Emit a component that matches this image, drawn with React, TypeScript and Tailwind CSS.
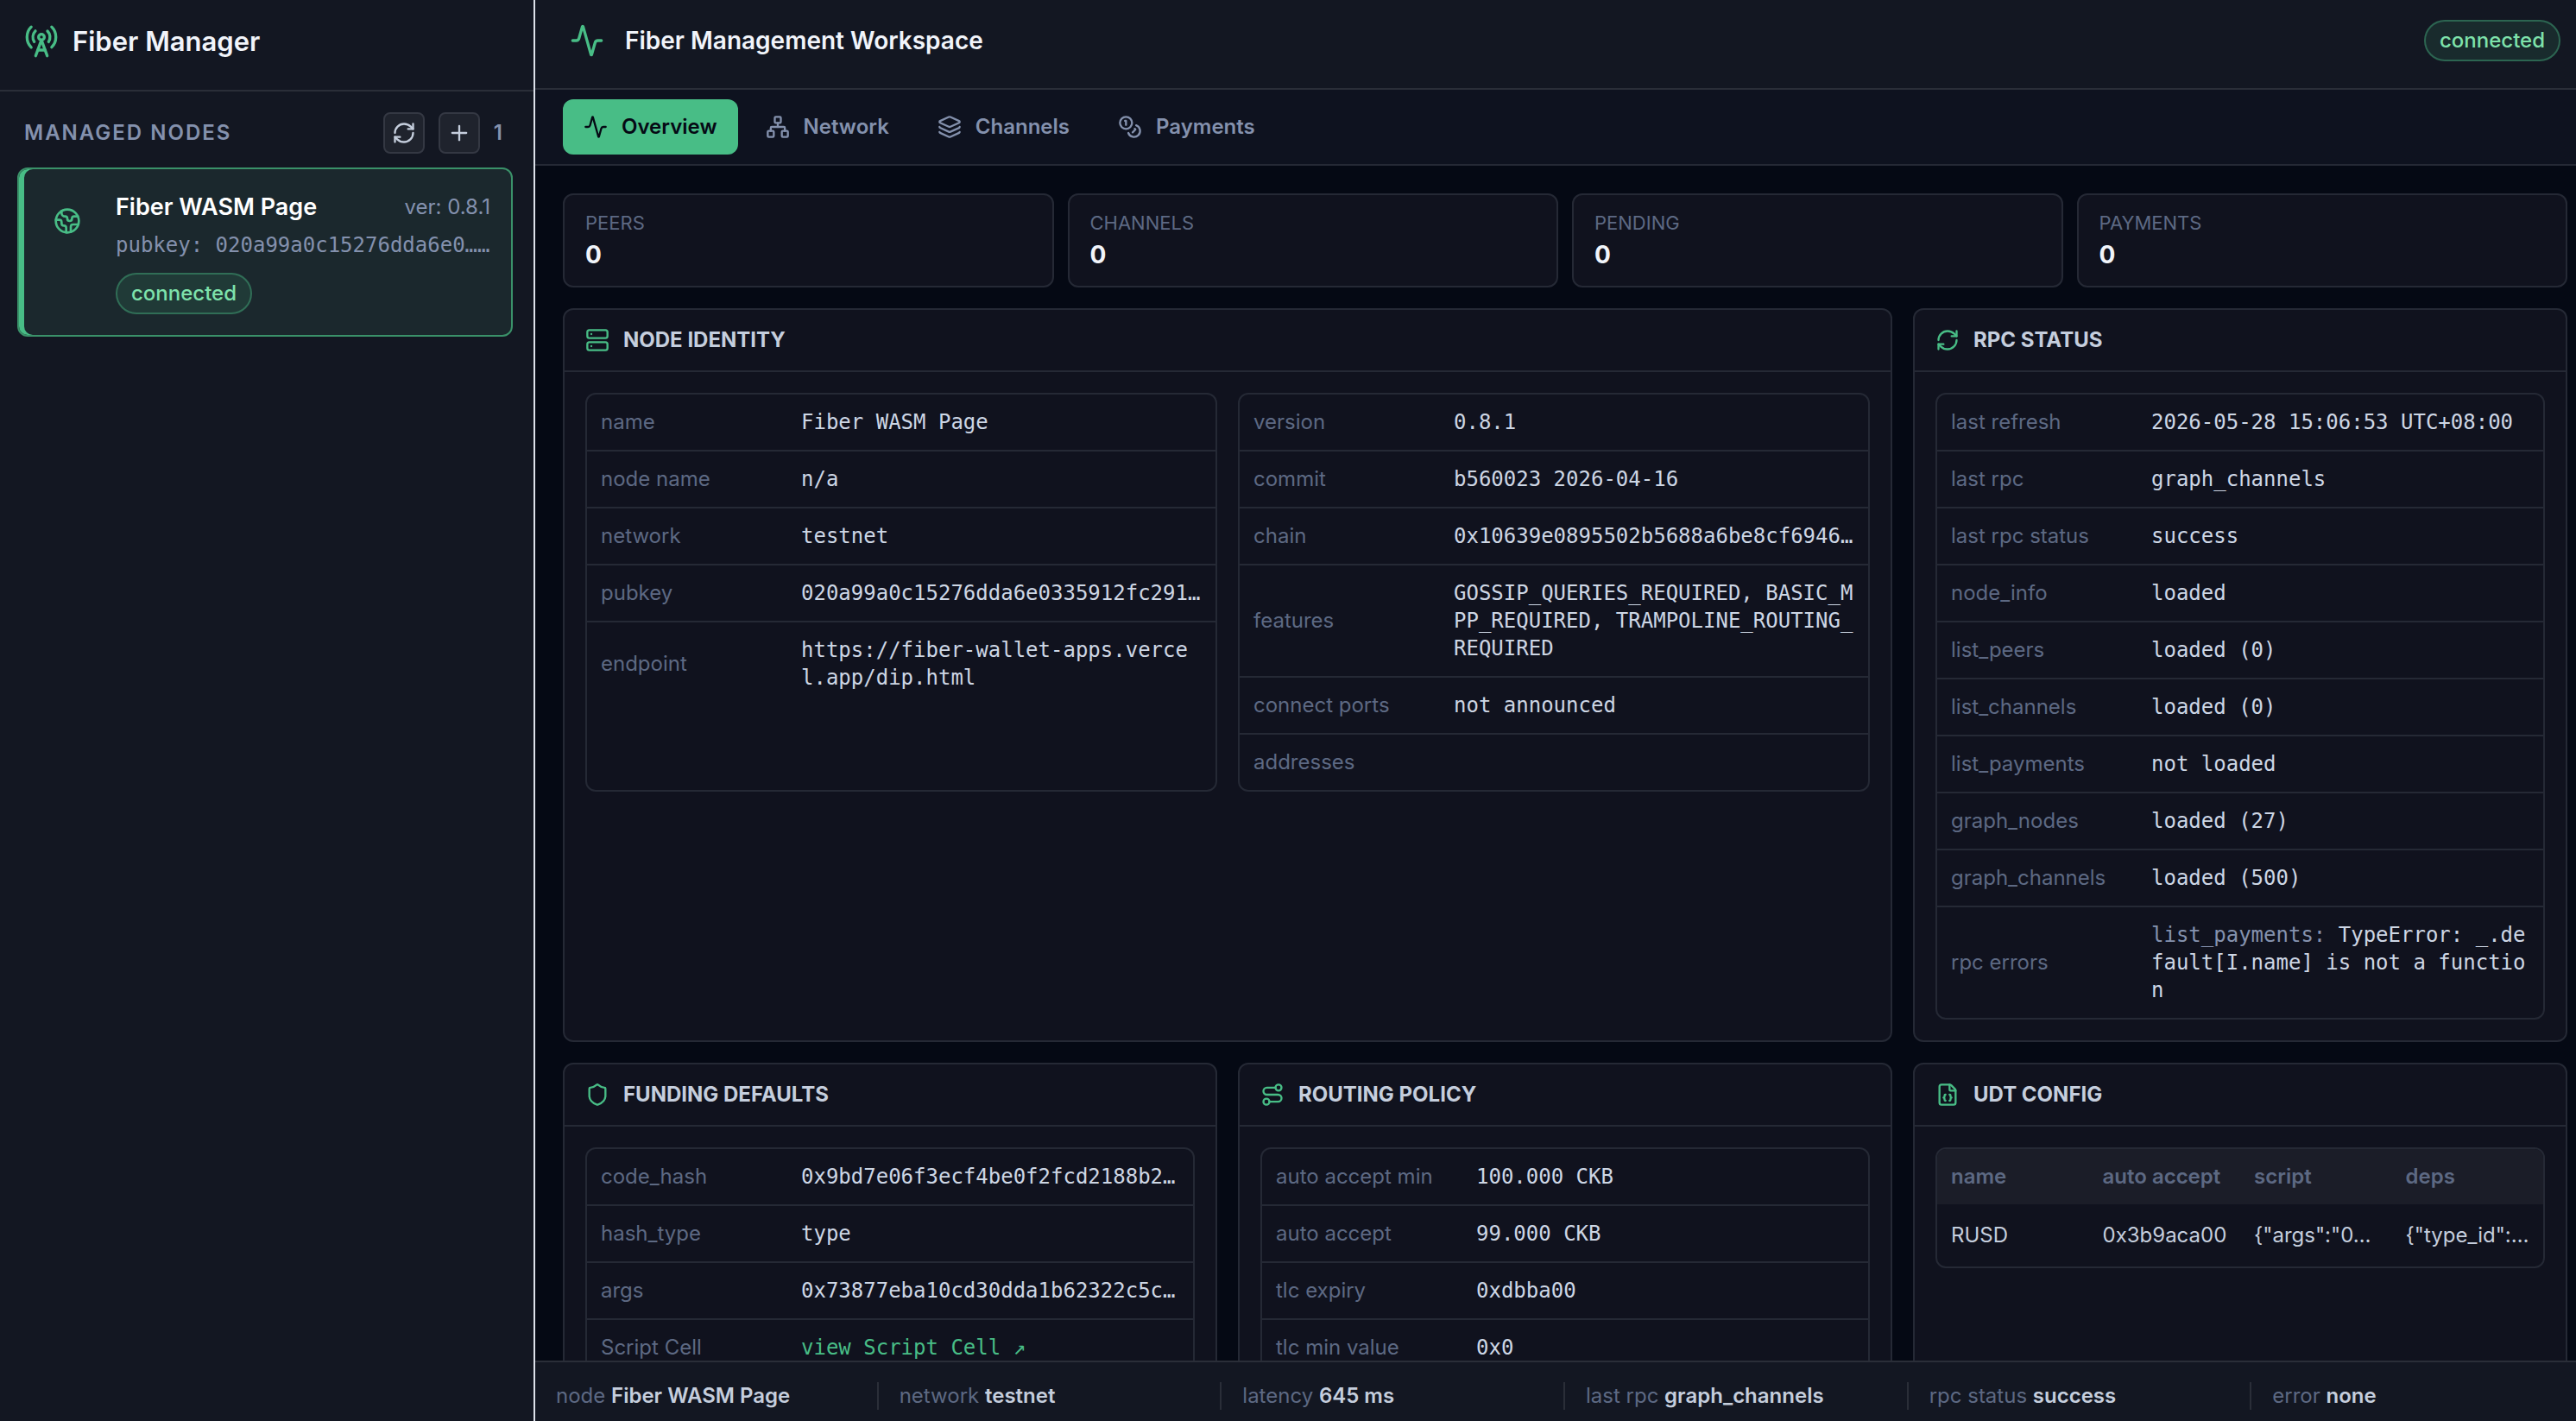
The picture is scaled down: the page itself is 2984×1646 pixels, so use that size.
import type { ReactNode } from "react";
import {
  Activity,
  Coins,
  Earth,
  FileJson,
  Layers,
  Network,
  Plus,
  RadioTower,
  RefreshCw,
  Route,
  Server,
  Shield,
  type LucideIcon,
} from "lucide-react";

type Row = { label: string; value: ReactNode; wrap?: boolean };

const TABS = [
  { label: "Overview", icon: Activity, active: true },
  { label: "Network", icon: Network },
  { label: "Channels", icon: Layers },
  { label: "Payments", icon: Coins },
];

const STATS = [
  { label: "PEERS", value: 0 },
  { label: "CHANNELS", value: 0 },
  { label: "PENDING", value: 0 },
  { label: "PAYMENTS", value: 0 },
];

const IDENTITY: Row[] = [
  { label: "name", value: "Fiber WASM Page" },
  { label: "node name", value: "n/a" },
  { label: "network", value: "testnet" },
  { label: "pubkey", value: "020a99a0c15276dda6e0335912fc291…" },
  { label: "endpoint", value: "https://fiber-wallet-apps.vercel.app/dip.html", wrap: true },
];

const VERSION: Row[] = [
  { label: "version", value: "0.8.1" },
  { label: "commit", value: "b560023 2026-04-16" },
  { label: "chain", value: "0x10639e0895502b5688a6be8cf6946…" },
  {
    label: "features",
    value: "GOSSIP_QUERIES_REQUIRED, BASIC_MPP_REQUIRED, TRAMPOLINE_ROUTING_REQUIRED",
    wrap: true,
  },
  { label: "connect ports", value: "not announced" },
  { label: "addresses", value: "" },
];

const RPC: Row[] = [
  { label: "last refresh", value: "2026-05-28 15:06:53 UTC+08:00" },
  { label: "last rpc", value: "graph_channels" },
  { label: "last rpc status", value: "success" },
  { label: "node_info", value: "loaded" },
  { label: "list_peers", value: "loaded (0)" },
  { label: "list_channels", value: "loaded (0)" },
  { label: "list_payments", value: "not loaded" },
  { label: "graph_nodes", value: "loaded (27)" },
  { label: "graph_channels", value: "loaded (500)" },
  {
    label: "rpc errors",
    value: (
      <>
        <span className="text-[#8491ad]">list_payments:</span> TypeError: _.default[I.name] is not a
        function
      </>
    ),
    wrap: true,
  },
];

const FUNDING: Row[] = [
  { label: "code_hash", value: "0x9bd7e06f3ecf4be0f2fcd2188b2…" },
  { label: "hash_type", value: "type" },
  { label: "args", value: "0x73877eba10cd30dda1b62322c5c…" },
  {
    label: "Script Cell",
    value: (
      <a href="#script-cell" className="text-[#48bd86]">
        view Script Cell ↗
      </a>
    ),
  },
];

const ROUTING: Row[] = [
  { label: "auto accept min", value: "100.000 CKB" },
  { label: "auto accept", value: "99.000 CKB" },
  { label: "tlc expiry", value: "0xdbba00" },
  { label: "tlc min value", value: "0x0" },
];

const UDT_COLUMNS = ["name", "auto accept", "script", "deps"];
const UDT_ROWS = [["RUSD", "0x3b9aca00", '{"args":"0…', '{"type_id":…']];

const STATUS = [
  { label: "node", value: "Fiber WASM Page" },
  { label: "network", value: "testnet" },
  { label: "latency", value: "645 ms" },
  { label: "last rpc", value: "graph_channels" },
  { label: "rpc status", value: "success" },
  { label: "error", value: "none" },
];

function Badge({ children }: { children: ReactNode }) {
  return (
    <span className="inline-flex h-12 items-center rounded-full border-2 border-[#48bd86]/40 bg-[#48bd86]/12 px-4 text-2xl font-medium text-[#7ee2ab]">
      {children}
    </span>
  );
}

function Panel({
  icon: Icon,
  title,
  className = "",
  children,
}: {
  icon: LucideIcon;
  title: string;
  className?: string;
  children: ReactNode;
}) {
  return (
    <section className={`min-w-0 rounded-xl border-2 border-[#252935] bg-[#10121e] ${className}`}>
      <header className="flex h-[72px] items-center gap-4 border-b-2 border-[#252935] px-6">
        <Icon className="size-7 text-[#48bd86]" aria-hidden />
        <h2 className="text-2xl font-bold text-[#c5cedd]">{title}</h2>
      </header>
      <div className="p-6">{children}</div>
    </section>
  );
}

function Details({ rows }: { rows: Row[] }) {
  return (
    <dl className="min-w-0 rounded-xl border-2 border-[#252935]">
      {rows.map((row) => (
        <div
          key={row.label}
          className="grid grid-cols-[216px_minmax(0,1fr)] items-center gap-4 border-b-2 border-[#252935] p-4 text-2xl leading-8 last:border-b-0"
        >
          <dt className="text-[#5d6983]">{row.label}</dt>
          <dd
            className={`font-['DejaVu_Sans_Mono',monospace] text-[#cdd6e4] ${
              row.wrap ? "break-all" : "truncate"
            }`}
          >
            {row.value}
          </dd>
        </div>
      ))}
    </dl>
  );
}

function Sidebar() {
  return (
    <aside className="w-[620px] shrink-0 border-r-2 border-[#dde1ea] bg-[#131722]">
      <header className="flex h-[106px] items-center gap-4 border-b-2 border-[#2a2e38] px-7 pb-2">
        <RadioTower className="size-10 text-[#48bd86]" aria-hidden />
        <h1 className="text-[31px] font-semibold text-[#f1f4fa]">Fiber Manager</h1>
      </header>
      <div className="flex h-[88px] items-center justify-between pt-2 pr-9 pl-7 text-2xl font-semibold text-[#8491ad]">
        <h2 className="tracking-[2px]">MANAGED NODES</h2>
        <div className="flex items-center gap-4">
          <button
            aria-label="Refresh nodes"
            className="flex size-12 items-center justify-center rounded-lg border-2 border-[#343843] bg-[#1f232d] text-[#c5cedd]"
          >
            <RefreshCw className="size-7" />
          </button>
          <button
            aria-label="Add node"
            className="flex size-12 items-center justify-center rounded-lg border-2 border-[#343843] bg-[#1f232d] text-[#c5cedd]"
          >
            <Plus className="size-7" />
          </button>
          <span>1</span>
        </div>
      </div>
      <div className="pr-6 pl-5">
        <button className="flex w-full gap-6 rounded-xl border-2 border-[#3a9169] bg-[#1b282d] p-6 text-left shadow-[inset_6px_0_0_#48bd86]">
          <span className="flex w-16 shrink-0 justify-center pt-5">
            <Earth className="size-8 text-[#48bd86]" aria-hidden />
          </span>
          <span className="min-w-0 flex-1">
            <span className="flex items-center justify-between">
              <span className="text-[27px] leading-10 font-semibold text-white">Fiber WASM Page</span>
              <span className="text-2xl leading-10 text-[#8491ad]">ver: 0.8.1</span>
            </span>
            <span className="mt-1 mb-3 block font-['DejaVu_Sans_Mono',monospace] text-2xl leading-10 whitespace-nowrap text-[#8491ad]">
              pubkey: 020a99a0c15276dda6e0……
            </span>
            <Badge>connected</Badge>
          </span>
        </button>
      </div>
    </aside>
  );
}

export default function App() {
  return (
    <div className="flex h-screen overflow-hidden bg-[#050914] font-[Inter,sans-serif] text-[#c5cedd]">
      <Sidebar />
      <main className="-mr-[22px] flex min-w-0 flex-1 flex-col">
        <header className="flex h-[104px] shrink-0 items-center justify-between border-b-2 border-[#2a2e38] bg-[#131722] px-10 pb-2">
          <div className="flex items-center gap-6">
            <Activity className="size-10 text-[#48bd86]" aria-hidden />
            <h1 className="text-[28px] font-semibold text-[#f1f4fa]">Fiber Management Workspace</h1>
          </div>
          <Badge>connected</Badge>
        </header>

        <nav
          className="flex h-[88px] shrink-0 items-center gap-2 border-b-2 border-[#252935] bg-[#0e121f] px-8"
          aria-label="Workspace"
        >
          {TABS.map(({ label, icon: Icon, active }) => (
            <button
              key={label}
              className={`flex h-16 items-center gap-4 rounded-xl px-6 text-2xl font-semibold ${
                active ? "bg-[#48bd86] text-[#050914]" : "text-[#8491ad]"
              }`}
            >
              <Icon className="size-7" aria-hidden />
              {label}
            </button>
          ))}
        </nav>

        <div className="min-h-0 flex-1 overflow-hidden px-8 pt-8">
          <div className="grid grid-cols-4 gap-4">
            {STATS.map((stat) => (
              <div key={stat.label} className="rounded-xl border-2 border-[#252935] bg-[#10121e] px-6 py-4">
                <div className="text-[22px] leading-[33px] text-[#5d6983]">{stat.label}</div>
                <div className="text-[28px] leading-10 font-bold text-[#f1f4fa]">{stat.value}</div>
              </div>
            ))}
          </div>

          <div className="mt-6 grid grid-cols-3 gap-6">
            <Panel icon={Server} title="NODE IDENTITY" className="col-span-2">
              <div className="grid grid-cols-2 gap-6">
                <Details rows={IDENTITY} />
                <Details rows={VERSION} />
              </div>
            </Panel>
            <Panel icon={RefreshCw} title="RPC STATUS">
              <Details rows={RPC} />
            </Panel>
            <Panel icon={Shield} title="FUNDING DEFAULTS">
              <Details rows={FUNDING} />
            </Panel>
            <Panel icon={Route} title="ROUTING POLICY">
              <Details rows={ROUTING} />
            </Panel>
            <Panel icon={FileJson} title="UDT CONFIG">
              <div className="overflow-hidden rounded-xl border-2 border-[#252935]">
                <table className="w-full table-fixed text-left text-2xl">
                  <thead className="bg-[#1b1d28] text-[#5d6983]">
                    <tr className="h-16">
                      {UDT_COLUMNS.map((column) => (
                        <th key={column} className="pr-2 pl-4 font-semibold whitespace-nowrap">
                          {column}
                        </th>
                      ))}
                    </tr>
                  </thead>
                  <tbody>
                    {UDT_ROWS.map((cells) => (
                      <tr key={cells[0]} className="h-[72px]">
                        {cells.map((cell) => (
                          <td key={cell} className="truncate pr-2 pl-4">
                            {cell}
                          </td>
                        ))}
                      </tr>
                    ))}
                  </tbody>
                </table>
              </div>
            </Panel>
          </div>
        </div>

        <footer className="grid h-[70px] shrink-0 grid-cols-6 items-center border-t-2 border-[#2a2e38] bg-[#131722] pt-[10px] text-2xl">
          {STATUS.map((item) => (
            <div key={item.label} className="border-r-2 border-[#2a2e38] px-6 leading-8 whitespace-nowrap">
              <span className="text-[#5d6983]">{item.label}</span>{" "}
              <strong className="font-semibold">{item.value}</strong>
            </div>
          ))}
        </footer>
      </main>
    </div>
  );
}
